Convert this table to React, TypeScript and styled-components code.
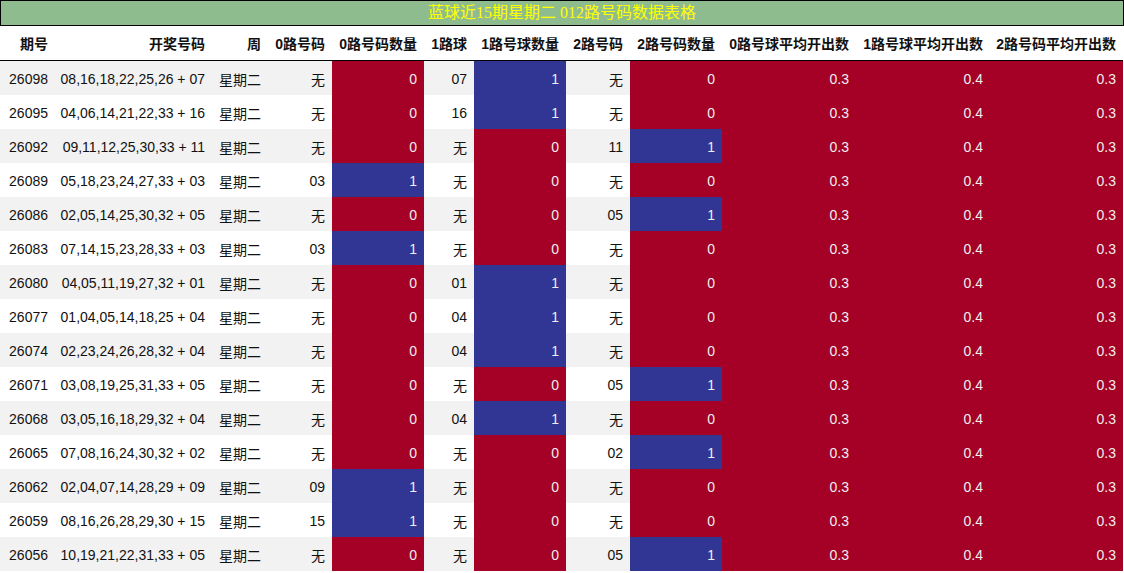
import React from "react";
import styled, { createGlobalStyle } from "styled-components";

const Global = createGlobalStyle`
  html, body { margin: 0; padding: 0; background: #fff; }
  body { font-family: "Liberation Sans", Arial, "Noto Sans CJK SC", sans-serif; }
`;

const RED = "#a50026";
const BLUE = "#313695";

const Wrap = styled.div`
  width: 1124px;
`;

const Title = styled.div`
  box-sizing: border-box;
  height: 26px;
  border: 1px solid #000;
  background: #8fbc8f;
  color: #ffff00;
  font-family: "Liberation Serif", "Noto Sans CJK SC", serif;
  font-size: 16px;
  line-height: 24px;
  text-align: center;
  width: 1124px;
`;

const Table = styled.table`
  table-layout: fixed;
  border-collapse: collapse;
  width: 1123px;
  font-size: 14px;
  color: #111;
`;

const HeadCell = styled.th`
  height: 34px;
  padding: 0 7px 0 0;
  text-align: right;
  font-weight: bold;
  font-size: 14px;
  color: #111;
  white-space: nowrap;
  border-bottom: 1px solid #000;
`;

const Row = styled.tr<{ $alt: boolean }>`
  background: ${(p) => (p.$alt ? "#f2f2f2" : "#ffffff")};
`;

const Cell = styled.td<{ $fill?: string }>`
  box-sizing: border-box;
  height: 34px;
  padding: 2px 7px 0 0;
  text-align: right;
  white-space: nowrap;
  background: ${(p) => p.$fill ?? "transparent"};
  color: ${(p) => (p.$fill ? "#eeeeee" : "#111")};
`;

const widths = [55, 157, 56, 64, 92, 50, 92, 64, 92, 134, 134, 133];
const heads = [
  "期号",
  "开奖号码",
  "周",
  "0路号码",
  "0路号码数量",
  "1路球",
  "1路号球数量",
  "2路号码",
  "2路号码数量",
  "0路号球平均开出数",
  "1路号球平均开出数",
  "2路号码平均开出数",
];

type R = [string, string, string, string, string, string];
const rows: [string, string, R][] = [
  ["26098", "08,16,18,22,25,26 + 07", ["无", "0", "07", "1", "无", "0"]],
  ["26095", "04,06,14,21,22,33 + 16", ["无", "0", "16", "1", "无", "0"]],
  ["26092", "09,11,12,25,30,33 + 11", ["无", "0", "无", "0", "11", "1"]],
  ["26089", "05,18,23,24,27,33 + 03", ["03", "1", "无", "0", "无", "0"]],
  ["26086", "02,05,14,25,30,32 + 05", ["无", "0", "无", "0", "05", "1"]],
  ["26083", "07,14,15,23,28,33 + 03", ["03", "1", "无", "0", "无", "0"]],
  ["26080", "04,05,11,19,27,32 + 01", ["无", "0", "01", "1", "无", "0"]],
  ["26077", "01,04,05,14,18,25 + 04", ["无", "0", "04", "1", "无", "0"]],
  ["26074", "02,23,24,26,28,32 + 04", ["无", "0", "04", "1", "无", "0"]],
  ["26071", "03,08,19,25,31,33 + 05", ["无", "0", "无", "0", "05", "1"]],
  ["26068", "03,05,16,18,29,32 + 04", ["无", "0", "04", "1", "无", "0"]],
  ["26065", "07,08,16,24,30,32 + 02", ["无", "0", "无", "0", "02", "1"]],
  ["26062", "02,04,07,14,28,29 + 09", ["09", "1", "无", "0", "无", "0"]],
  ["26059", "08,16,26,28,29,30 + 15", ["15", "1", "无", "0", "无", "0"]],
  ["26056", "10,19,21,22,31,33 + 05", ["无", "0", "无", "0", "05", "1"]],
];

const fillFor = (v: string) => (v === "1" ? BLUE : RED);

export default function App() {
  return (
    <Wrap>
      <Global />
      <Title>蓝球近15期星期二 012路号码数据表格</Title>
      <Table>
        <colgroup>
          {widths.map((w, i) => (
            <col key={i} style={{ width: w }} />
          ))}
        </colgroup>
        <thead>
          <tr>
            {heads.map((h) => (
              <HeadCell key={h}>{h}</HeadCell>
            ))}
          </tr>
        </thead>
        <tbody>
          {rows.map(([id, nums, r], i) => (
            <Row key={id} $alt={i % 2 === 0}>
              <Cell>{id}</Cell>
              <Cell>{nums}</Cell>
              <Cell>星期二</Cell>
              <Cell>{r[0]}</Cell>
              <Cell $fill={fillFor(r[1])}>{r[1]}</Cell>
              <Cell>{r[2]}</Cell>
              <Cell $fill={fillFor(r[3])}>{r[3]}</Cell>
              <Cell>{r[4]}</Cell>
              <Cell $fill={fillFor(r[5])}>{r[5]}</Cell>
              <Cell $fill={RED}>0.3</Cell>
              <Cell $fill={RED}>0.4</Cell>
              <Cell $fill={RED}>0.3</Cell>
            </Row>
          ))}
        </tbody>
      </Table>
    </Wrap>
  );
}
